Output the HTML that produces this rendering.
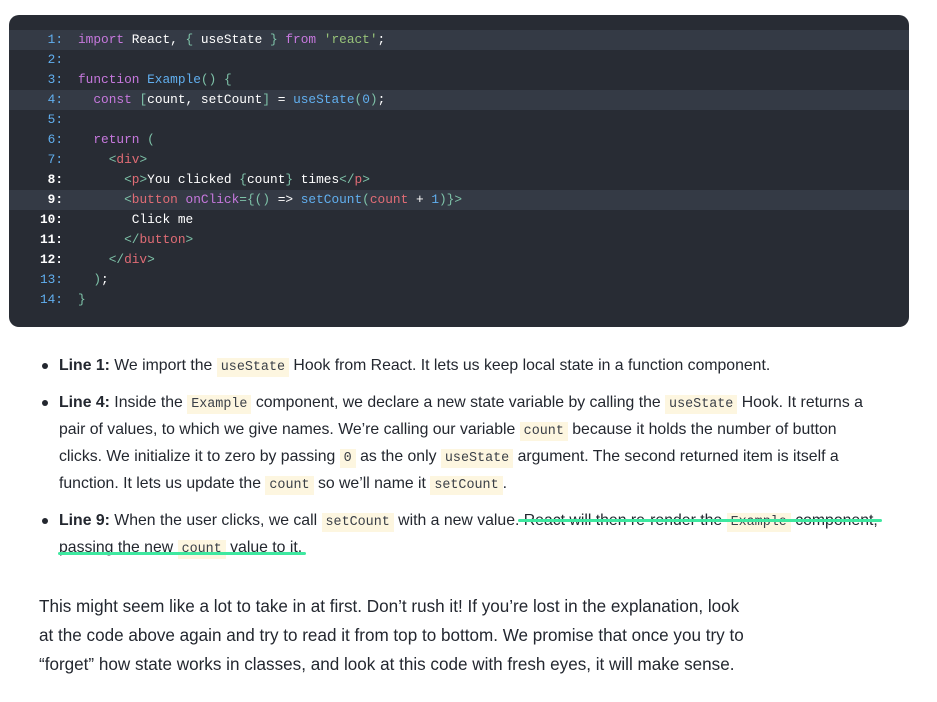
<!DOCTYPE html>
<html><head><meta charset="utf-8"><style>
body{margin:0;background:#fff;width:937px;height:702px;position:relative;overflow:hidden;font-family:"Liberation Sans",Arial,sans-serif;color:#23272f}
.code{position:absolute;left:9px;top:15px;width:900px;height:312px;background:#282c34;border-radius:10px;overflow:hidden}
.ln{position:absolute;left:0;width:900px;height:20px;line-height:20px;font-family:"Liberation Mono",monospace;font-size:12.8px;color:#fff;white-space:pre}
.ln.hl{background:#343a45}
.n{position:absolute;right:846px;color:#61afef;text-align:right}
.n.b{color:#fff;font-weight:bold}
.c{position:absolute;left:69px}
.k{color:#c678dd}.s{color:#98c379}.g{color:#7ec2a8}.f{color:#61afef}.t{color:#e06c75}.o{color:#56b6c2}.nu{color:#61afef}
.L{position:absolute;left:59px;font-size:15.8px;line-height:27px;white-space:nowrap}
.bul{position:absolute;left:42px;width:6px;height:6px;border-radius:50%;background:#23272f}
code{font-family:"Liberation Mono",monospace;font-size:13.4px;background:#fdf6e0;padding:2px 4px;color:#3a3f47}
.P{position:absolute;left:39px;font-size:17.1px;line-height:29px;white-space:nowrap}
.hlg{position:absolute;height:3px;background:#3ee8a0;border-radius:2px}
</style></head><body>
<div class="code">
<div class="ln hl" style="top:15px"><span class="n">1:</span><span class="c"><span class="k">import</span> React, <span class="g">{</span> useState <span class="g">}</span> <span class="k">from</span> <span class="s">'react'</span>;</span></div>
<div class="ln" style="top:35px"><span class="n">2:</span></div>
<div class="ln" style="top:55px"><span class="n">3:</span><span class="c"><span class="k">function</span> <span class="f">Example</span><span class="g">()</span> <span class="g">{</span></span></div>
<div class="ln hl" style="top:75px"><span class="n">4:</span><span class="c">  <span class="k">const</span> <span class="g">[</span>count, setCount<span class="g">]</span> = <span class="f">useState</span><span class="g">(</span><span class="nu">0</span><span class="g">)</span>;</span></div>
<div class="ln" style="top:95px"><span class="n">5:</span></div>
<div class="ln" style="top:115px"><span class="n">6:</span><span class="c">  <span class="k">return</span> <span class="g">(</span></span></div>
<div class="ln" style="top:135px"><span class="n">7:</span><span class="c">    <span class="g">&lt;</span><span class="t">div</span><span class="g">&gt;</span></span></div>
<div class="ln" style="top:155px"><span class="n b">8:</span><span class="c">      <span class="g">&lt;</span><span class="t">p</span><span class="g">&gt;</span>You clicked <span class="g">{</span>count<span class="g">}</span> times<span class="g">&lt;/</span><span class="t">p</span><span class="g">&gt;</span></span></div>
<div class="ln hl" style="top:175px"><span class="n b">9:</span><span class="c">      <span class="g">&lt;</span><span class="t">button</span> <span class="k">onClick</span><span class="g">={()</span> =&gt; <span class="f">setCount</span><span class="g">(</span><span class="t">count</span> + <span class="nu">1</span><span class="g">)}&gt;</span></span></div>
<div class="ln" style="top:195px"><span class="n b">10:</span><span class="c">       Click me</span></div>
<div class="ln" style="top:215px"><span class="n b">11:</span><span class="c">      <span class="g">&lt;/</span><span class="t">button</span><span class="g">&gt;</span></span></div>
<div class="ln" style="top:235px"><span class="n b">12:</span><span class="c">    <span class="g">&lt;/</span><span class="t">div</span><span class="g">&gt;</span></span></div>
<div class="ln" style="top:255px"><span class="n">13:</span><span class="c">  <span class="g">)</span>;</span></div>
<div class="ln" style="top:275px"><span class="n">14:</span><span class="c"><span class="g">}</span></span></div>
</div>

<div class="bul" style="top:363px"></div>
<div class="L" style="top:352px"><b>Line 1:</b> We import the <code>useState</code> Hook from React. It lets us keep local state in a function component.</div>
<div class="bul" style="top:400px"></div>
<div class="L" style="top:389px"><b>Line 4:</b> Inside the <code>Example</code> component, we declare a new state variable by calling the <code>useState</code> Hook. It returns a</div>
<div class="L" style="top:416px">pair of values, to which we give names. We’re calling our variable <code>count</code> because it holds the number of button</div>
<div class="L" style="top:443px">clicks. We initialize it to zero by passing <code>0</code> as the only <code>useState</code> argument. The second returned item is itself a</div>
<div class="L" style="top:470px">function. It lets us update the <code>count</code> so we’ll name it <code>setCount</code>.</div>
<div class="bul" style="top:518px"></div>
<div class="L" style="top:507px"><b>Line 9:</b> When the user clicks, we call <code>setCount</code> with a new value. React will then re-render the <code>Example</code> component,</div>
<div class="L" style="top:534px">passing the new <code>count</code> value to it.</div>
<div class="hlg" style="left:518px;top:519px;width:364px"></div>
<div class="hlg" style="left:58px;top:552px;width:248px"></div>

<div class="P" style="top:592px">This might seem like a lot to take in at first. Don’t rush it! If you’re lost in the explanation, look</div>
<div class="P" style="top:621px">at the code above again and try to read it from top to bottom. We promise that once you try to</div>
<div class="P" style="top:650px">“forget” how state works in classes, and look at this code with fresh eyes, it will make sense.</div>
</body></html>
